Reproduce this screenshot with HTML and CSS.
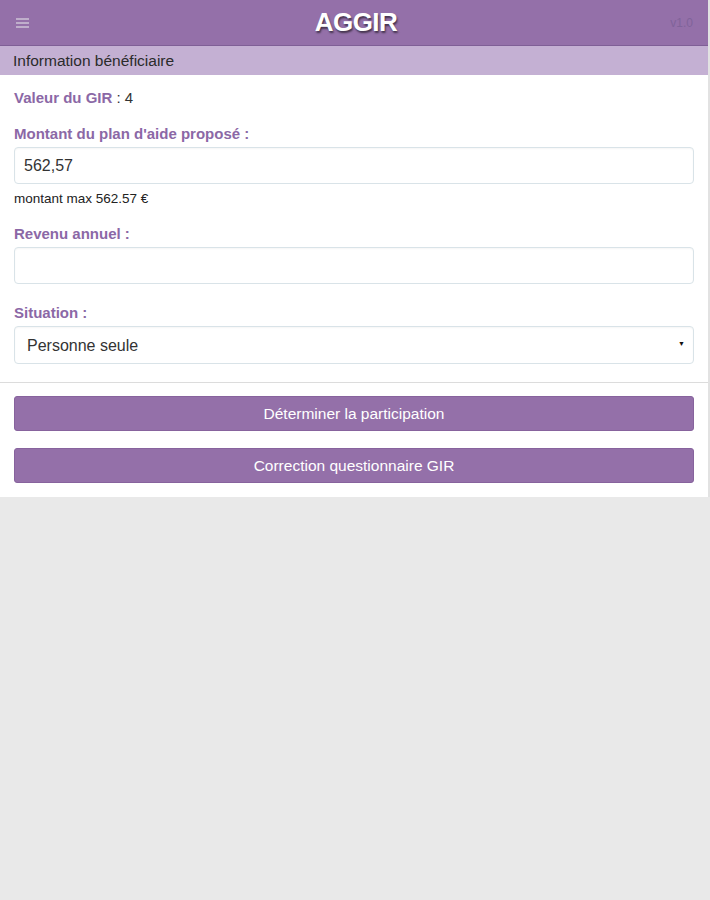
FILE: index.html
```html
<!DOCTYPE html>
<html lang="fr">

<head>
    <meta charset="UTF-8">
    <meta name="viewport" content="width=device-width, initial-scale=1.0">
    <title>AGGIR</title>
    <link rel="stylesheet" href="styles.css">
</head>

<body>
    <div class="page">
        <header class="topbar">
            <svg class="menu-btn" width="13" height="10" viewBox="0 0 13 10">
                <rect x="0" y="0" width="13" height="2" fill="#bfaecb" />
                <rect x="0" y="4" width="13" height="2" fill="#bfaecb" />
                <rect x="0" y="8" width="13" height="2" fill="#bfaecb" />
            </svg>
            <h1>AGGIR</h1>
            <span class="version">v1.0</span>
        </header>
        <div class="subbar">Information bénéficiaire</div>

        <div class="form-section">
            <p class="gir"><span class="label">Valeur du GIR</span> : 4</p>

            <label class="field-label" for="montant">Montant du plan d'aide proposé :</label>
            <input type="text" id="montant" class="field" value="562,57">
            <p class="hint">montant max 562.57 €</p>

            <label class="field-label" for="revenu">Revenu annuel :</label>
            <input type="text" id="revenu" class="field">

            <label class="field-label situation" for="situation">Situation :</label>
            <div class="select-wrap">
                <select id="situation" class="field">
                    <option>Personne seule</option>
                    <option>En couple</option>
                </select>
                <span class="arrow">&#9660;</span>
            </div>
        </div>

        <div class="actions">
            <button class="action-btn">Déterminer la participation</button>
            <button class="action-btn">Correction questionnaire GIR</button>
        </div>
    </div>
</body>

</html>
```

FILE: styles.css
```css
body {
    margin: 0;
    background-color: #e9e9e9;
    font-family: 'Liberation Sans', Arial, sans-serif;
    color: #333;
}

.page {
    background-color: #fff;
    border-right: 2px solid #e2e2e2;
}

/* Barre du haut */
.topbar {
    height: 45px;
    background-color: #9470a9;
    border-bottom: 1px solid #7f5f96;
    display: grid;
    grid-template-columns: 1fr auto 1fr;
    align-items: center;
    padding: 0 15px 0 16px;
}

.topbar h1 {
    margin: 0 0 0 3px;
    font-size: 26px;
    font-weight: bold;
    color: #fff;
    text-shadow: 1px 2px 2px rgba(0, 0, 0, 0.55);
    letter-spacing: -0.5px;
}

.menu-btn {
    display: block;
}

.version {
    justify-self: end;
    color: #80639a;
    font-size: 12px;
}

.subbar {
    height: 29px;
    line-height: 29px;
    background-color: #c4b0d3;
    padding: 0 13px;
    font-size: 15.5px;
    color: #2b2b2b;
}

/* Formulaire */
.form-section {
    padding: 13px 14px 18px 14px;
    border-bottom: 1px solid #dcdcdc;
}

.gir {
    margin: 0;
    font-size: 15px;
    line-height: 20px;
}

.label,
.field-label {
    color: #8b68a6;
    font-weight: bold;
}

.field-label {
    display: block;
    font-size: 15px;
    line-height: 20px;
    margin: 16px 0 3px 0;
}

.field {
    display: block;
    box-sizing: border-box;
    width: 100%;
    height: 37px;
    border: 1px solid #d9e3e8;
    border-radius: 4px;
    padding: 0 9px;
    font-family: inherit;
    font-size: 16px;
    color: #333;
    background-color: #fff;
    box-shadow: inset 0 1px 2px rgba(0, 0, 0, 0.04);
}

.hint {
    margin: 7px 0 0 0;
    font-size: 13.5px;
    line-height: 16px;
    color: #222;
}

.hint + .field-label {
    margin-top: 17px;
}

.situation {
    margin-top: 19px;
}

.select-wrap {
    position: relative;
}

.select-wrap select {
    height: 38px;
    appearance: none;
    -webkit-appearance: none;
    padding: 0 12px;
}

.arrow {
    position: absolute;
    right: 9px;
    top: 14px;
    font-size: 7px;
    color: #111;
}

/* Boutons */
.actions {
    padding: 13px 14px 14px 14px;
    display: flex;
    flex-direction: column;
    gap: 17px;
}

.action-btn {
    height: 35px;
    background-color: #9470a9;
    border: 1px solid #87639d;
    border-radius: 3px;
    color: #fff;
    font-family: inherit;
    font-size: 15.5px;
    cursor: pointer;
}
```
